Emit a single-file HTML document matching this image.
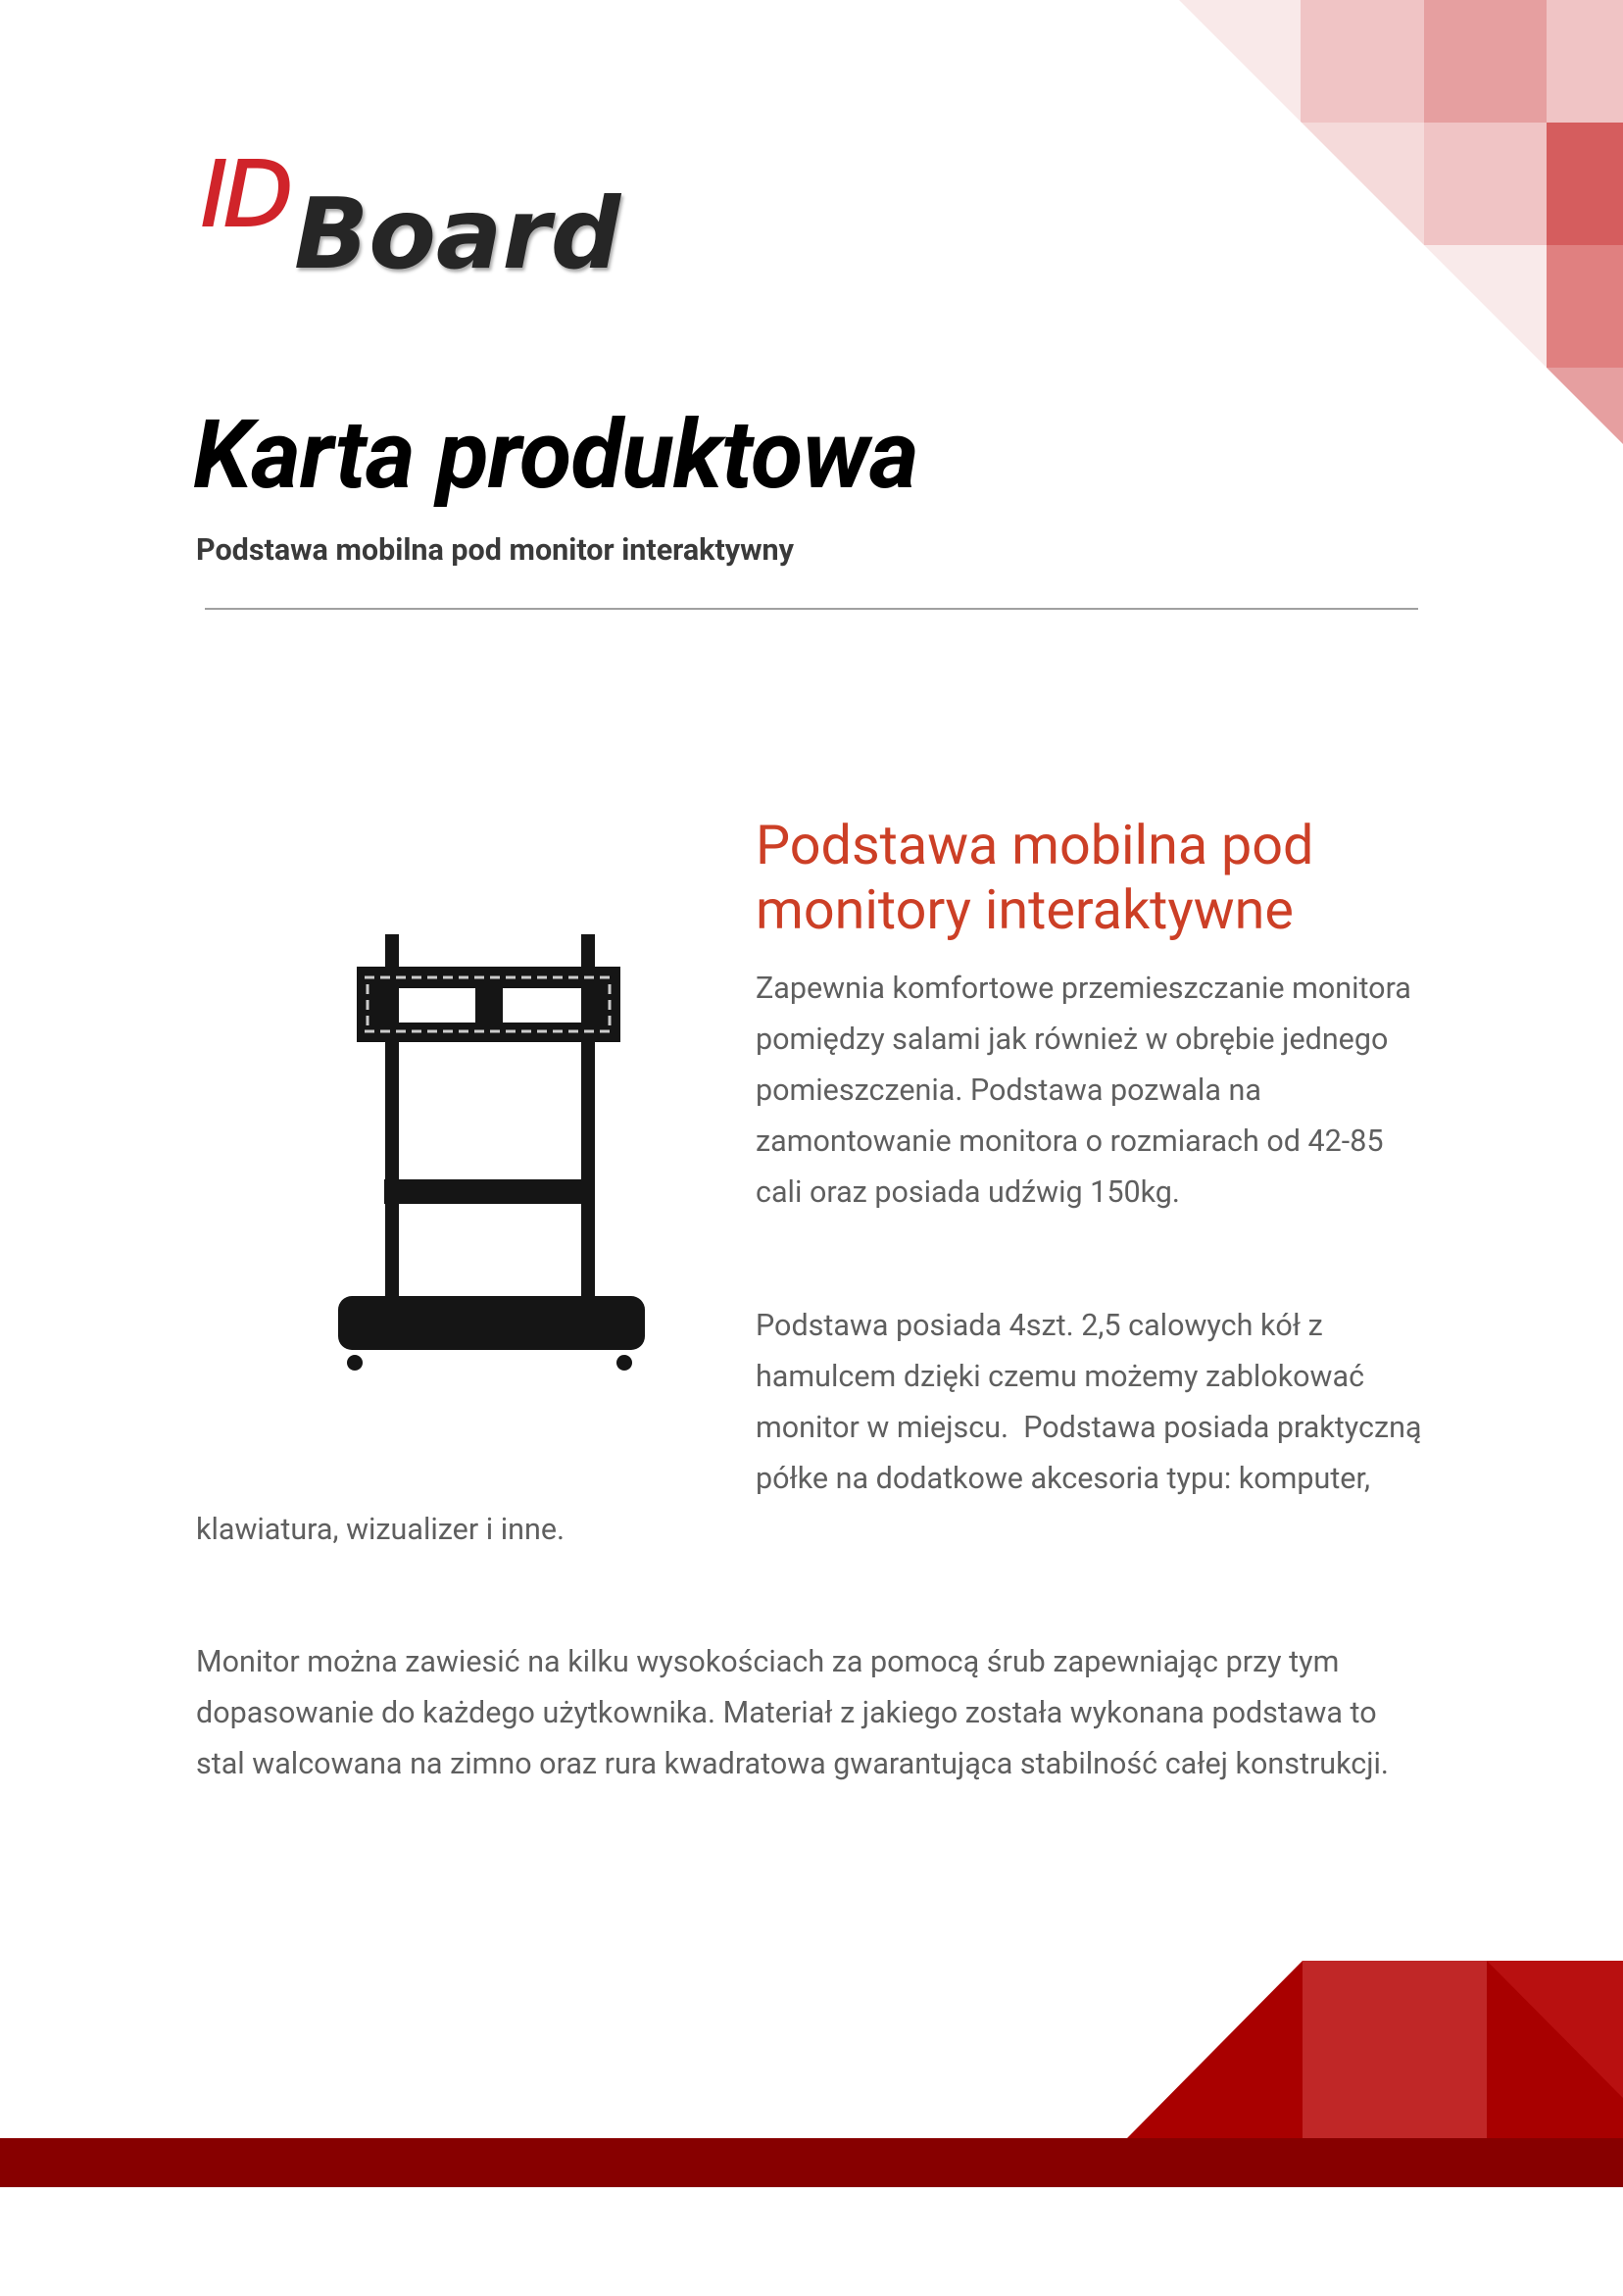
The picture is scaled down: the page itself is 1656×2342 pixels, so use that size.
<!DOCTYPE html>
<html><head><meta charset="utf-8"><style>
html,body{margin:0;padding:0;background:#fff}
body{width:1656px;height:2342px;position:relative;overflow:hidden;font-family:"Roboto","Liberation Sans",sans-serif}
.a{position:absolute;white-space:nowrap}
.b{font-size:30.5px;color:#5f5f5f;line-height:52px}
.h{font-size:55.7px;color:#cc3f26;line-height:66px}
</style></head><body>
<svg class="a" style="left:0;top:0" width="1656" height="470">
<rect x="1150" y="0" width="177" height="125" fill="#f9e9e9"/>
<rect x="1327" y="0" width="126" height="125" fill="#f0c4c5"/>
<rect x="1453" y="0" width="125" height="125" fill="#e69fa0"/>
<rect x="1578" y="0" width="78" height="125" fill="#f0c4c5"/>
<rect x="1327" y="125" width="126" height="125" fill="#f5dada"/>
<rect x="1453" y="125" width="125" height="125" fill="#f0c4c5"/>
<rect x="1578" y="125" width="78" height="125" fill="#d55d5e"/>
<rect x="1453" y="250" width="125" height="125" fill="#f9eaea"/>
<rect x="1578" y="250" width="78" height="125" fill="#e08080"/>
<rect x="1578" y="375" width="78" height="95" fill="#e69fa0"/>
<polygon points="1150,0 1203,0 1656,453 1656,470 1150,470" fill="#fff"/>
</svg>
<svg class="a" style="left:1100px;top:1990px" width="556" height="250">
<polygon points="50,191 229,10 229,191" fill="#a90000"/>
<rect x="229" y="10" width="188" height="181" fill="#c02727"/>
<rect x="417" y="10" width="139" height="181" fill="#b81010"/>
<polygon points="417,10 556,150 556,191 417,191" fill="#a80000"/>
<rect x="0" y="191" width="556" height="50" fill="#870000"/>
</svg>
<div class="a" style="left:0;top:2181px;width:1100px;height:50px;background:#870000"></div>
<div class="a" style="left:205px;top:145px;font-family:'DejaVu Sans',sans-serif;font-style:italic;font-size:92px;color:#d0242a;letter-spacing:-4px;-webkit-text-stroke:2px #d0242a">ID</div>
<div class="a" style="left:300px;top:180px;font-family:'DejaVu Sans',sans-serif;font-style:italic;font-weight:bold;font-size:100px;color:#262626;letter-spacing:0px;text-shadow:2px 3px 3px #aaa">Board</div>
<div class="a" style="left:197px;top:406px;font-size:97.6px;font-weight:bold;font-style:italic;color:#000;letter-spacing:-1px">Karta produktowa</div>
<div class="a" style="left:200px;top:544px;font-size:30.5px;font-weight:bold;color:#3a3a3a">Podstawa mobilna pod monitor interaktywny</div>
<div class="a" style="left:209px;top:620px;width:1238px;height:2px;background:#a0a0a0"></div>
<svg class="a" style="left:330px;top:940px" width="350" height="470">
<g fill="#151515">
<rect x="63" y="13" width="14" height="400"/>
<rect x="263" y="13" width="14" height="400"/>
<rect x="34" y="46" width="269" height="77"/>
<rect x="62" y="263" width="215" height="25"/>
<rect x="15" y="382" width="313" height="55" rx="14"/>
<circle cx="32" cy="450" r="8"/><circle cx="307" cy="450" r="8"/>
</g>
<g fill="#fff">
<rect x="77" y="68" width="78" height="35"/>
<rect x="183" y="68" width="80" height="35"/>
</g>
<g stroke="#ccc" stroke-width="3" stroke-dasharray="10,6">
<line x1="42" y1="57" x2="296" y2="57"/>
<line x1="42" y1="112" x2="296" y2="112"/>
<line x1="45" y1="64" x2="45" y2="108"/>
<line x1="292" y1="64" x2="292" y2="108"/>
</g>
</svg>
<div class="a h" style="left:771px;top:829px">Podstawa mobilna pod</div>
<div class="a h" style="left:771px;top:895px">monitory interaktywne</div>
<div class="a b" style="left:771px;top:983px">Zapewnia komfortowe przemieszczanie monitora</div>
<div class="a b" style="left:771px;top:1035px">pomiędzy salami jak również w obrębie jednego</div>
<div class="a b" style="left:771px;top:1087px">pomieszczenia. Podstawa pozwala na</div>
<div class="a b" style="left:771px;top:1139px">zamontowanie monitora o rozmiarach od 42-85</div>
<div class="a b" style="left:771px;top:1191px">cali oraz posiada udźwig 150kg.</div>
<div class="a b" style="left:771px;top:1327px">Podstawa posiada 4szt. 2,5 calowych kół z</div>
<div class="a b" style="left:771px;top:1379px">hamulcem dzięki czemu możemy zablokować</div>
<div class="a b" style="left:771px;top:1431px">monitor w miejscu.&nbsp; Podstawa posiada praktyczną</div>
<div class="a b" style="left:771px;top:1483px">półke na dodatkowe akcesoria typu: komputer,</div>
<div class="a b" style="left:200px;top:1535px">klawiatura, wizualizer i inne.</div>
<div class="a b" style="left:200px;top:1670px">Monitor można zawiesić na kilku wysokościach za pomocą śrub zapewniając przy tym</div>
<div class="a b" style="left:200px;top:1722px">dopasowanie do każdego użytkownika. Materiał z jakiego została wykonana podstawa to</div>
<div class="a b" style="left:200px;top:1774px">stal walcowana na zimno oraz rura kwadratowa gwarantująca stabilność całej konstrukcji.</div>
</body></html>
